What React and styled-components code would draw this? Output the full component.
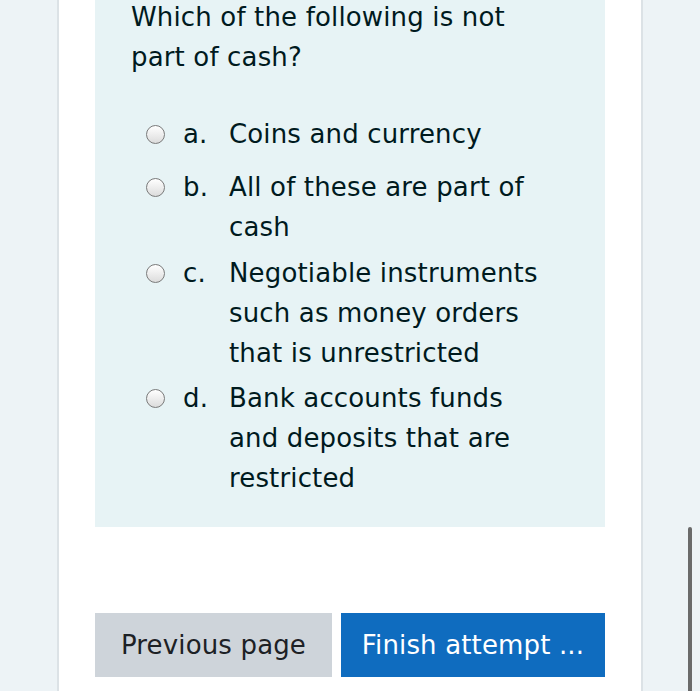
import React from 'react';
import styled, { createGlobalStyle } from 'styled-components';

const GlobalStyle = createGlobalStyle`
  html, body {
    margin: 0;
    padding: 0;
    background: #ffffff;
    overflow: hidden;
  }
  body {
    font-family: "DejaVu Sans", "Open Sans", sans-serif;
    color: #001a1e;
  }
`;

const Page = styled.div`
  position: relative;
  display: flex;
  width: 700px;
  height: 691px;
  overflow: hidden;
`;

const Rail = styled.aside`
  box-sizing: border-box;
  flex: 0 0 ${(props) => props.width}px;
  background: #edf3f6;
  border-left: ${(props) => (props.side === 'right' ? '2px solid #dce2e6' : 'none')};
  border-right: ${(props) => (props.side === 'left' ? '2px solid #dce2e6' : 'none')};
`;

const Main = styled.main`
  flex: 1;
  padding-left: 36px;
  display: flex;
  flex-direction: column;
`;

const Formulation = styled.div`
  width: 510px;
  box-sizing: border-box;
  background: #e7f3f5;
  padding: 0 50px 29px 36px;
`;

const QuestionText = styled.p`
  margin: -3px 0 0;
  font-size: 26px;
  line-height: 40px;
  letter-spacing: 0.15px;
`;

const Answers = styled.div`
  margin-top: 37px;
  padding-left: 15px;
  display: flex;
  flex-direction: column;
`;

const Answer = styled.label`
  display: flex;
  align-items: flex-start;
  margin-top: ${(props) => props.gap}px;
  font-size: 26px;
  line-height: 40px;
  letter-spacing: 0.15px;
`;

const Radio = styled.span`
  flex: 0 0 auto;
  box-sizing: border-box;
  width: 19px;
  height: 19px;
  margin-top: 11px;
  border: 1.5px solid #7a7a7a;
  border-radius: 50%;
  background: linear-gradient(#ffffff, #dcdcdc);
`;

const Letter = styled.span`
  flex: 0 0 46px;
  margin-left: 18px;
`;

const AnswerText = styled.span`
  flex: 1;
`;

const Buttons = styled.div`
  display: flex;
  gap: 9px;
  margin-top: 86px;
`;

const Button = styled.button`
  height: 64px;
  width: ${(props) => props.width}px;
  border: none;
  border-radius: 0;
  padding: 0;
  font-family: "DejaVu Sans", "Open Sans", sans-serif;
  font-size: 26px;
  letter-spacing: 0.15px;
  background: ${(props) => (props.primary ? '#0f6cbf' : '#ced4da')};
  color: ${(props) => (props.primary ? '#ffffff' : '#1d2125')};
`;

const ScrollThumb = styled.div`
  position: absolute;
  left: 688px;
  top: 527px;
  width: 4px;
  height: 170px;
  background: #6a6a6a;
  border-radius: 2px;
`;

const answers = [
  { letter: 'a.', text: 'Coins and currency', gap: 0 },
  { letter: 'b.', text: 'All of these are part of cash', gap: 13 },
  { letter: 'c.', text: 'Negotiable instruments such as money orders that is unrestricted', gap: 6 },
  { letter: 'd.', text: 'Bank accounts funds and deposits that are restricted', gap: 5 },
];

export default function App() {
  return (
    <Page>
      <GlobalStyle />
      <Rail side="left" width={59} />
      <Main>
        <Formulation>
          <QuestionText>Which of the following is not part of cash?</QuestionText>
          <Answers>
            {answers.map((a) => (
              <Answer key={a.letter} gap={a.gap}>
                <Radio />
                <Letter>{a.letter}</Letter>
                <AnswerText>{a.text}</AnswerText>
              </Answer>
            ))}
          </Answers>
        </Formulation>
        <Buttons>
          <Button width={237}>Previous page</Button>
          <Button primary width={264}>Finish attempt ...</Button>
        </Buttons>
      </Main>
      <Rail side="right" width={59} />
      <ScrollThumb />
    </Page>
  );
}
